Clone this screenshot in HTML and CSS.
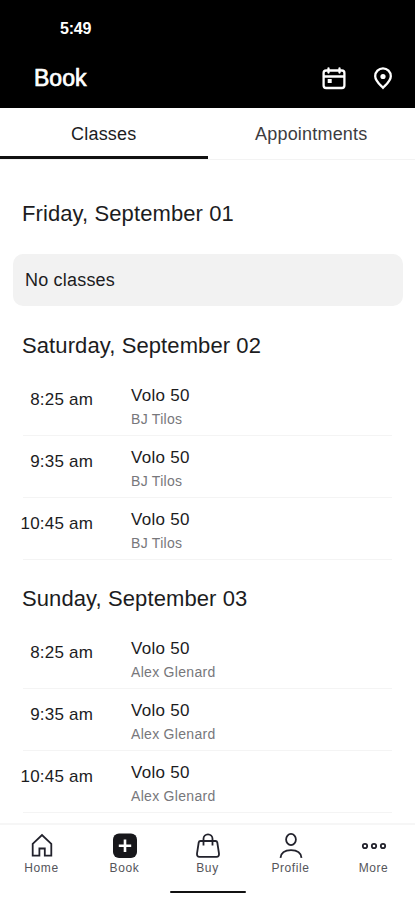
FILE: index.html
```html
<!DOCTYPE html>
<html lang="en">
<head>
    <meta charset="UTF-8">
    <meta name="viewport" content="width=device-width, initial-scale=1.0">
    <title>Book</title>
    <link rel="stylesheet" href="styles.css">
</head>
<body>

    <div class="app">
        <header class="header">
            <div class="status-bar"><span class="clock">5:49</span></div>
            <div class="title-bar">
                <h1>Book</h1>
                <div class="actions">
                    <svg width="24" height="24" viewBox="0 0 24 24">
                        <rect x="1.600" y="3.500" width="20.800" height="17.500" rx="2.500"/>
                        <path d="M2 9.500h20M6.500 1.500v4M17.500 1.500v4"/>
                        <rect class="dot" x="5.700" y="12" width="4" height="4"/>
                    </svg>
                    <svg width="20" height="24" viewBox="0 0 20 24">
                        <path d="M10 20.800C7.500 18 2.200 14 2.200 9.200a7.800 7.800 0 0 1 15.600 0c0 4.800-5.300 8.800-7.800 11.600z"/>
                        <circle class="dot" cx="10" cy="9.500" r="2.600"/>
                    </svg>
                </div>
            </div>
        </header>

        <nav class="tabs">
            <a class="tab active">Classes</a>
            <a class="tab">Appointments</a>
        </nav>

        <main class="schedule">
            <section class="day">
                <h2>Friday, September 01</h2>
                <div class="empty">No classes</div>
            </section>

            <section class="day">
                <h2>Saturday, September 02</h2>
                <div class="class-row">
                    <div class="time">8:25 am</div>
                    <div class="info"><div class="name">Volo 50</div><div class="teacher">BJ Tilos</div></div>
                </div>
                <div class="class-row">
                    <div class="time">9:35 am</div>
                    <div class="info"><div class="name">Volo 50</div><div class="teacher">BJ Tilos</div></div>
                </div>
                <div class="class-row">
                    <div class="time">10:45 am</div>
                    <div class="info"><div class="name">Volo 50</div><div class="teacher">BJ Tilos</div></div>
                </div>
            </section>

            <section class="day">
                <h2>Sunday, September 03</h2>
                <div class="class-row">
                    <div class="time">8:25 am</div>
                    <div class="info"><div class="name">Volo 50</div><div class="teacher">Alex Glenard</div></div>
                </div>
                <div class="class-row">
                    <div class="time">9:35 am</div>
                    <div class="info"><div class="name">Volo 50</div><div class="teacher">Alex Glenard</div></div>
                </div>
                <div class="class-row">
                    <div class="time">10:45 am</div>
                    <div class="info"><div class="name">Volo 50</div><div class="teacher">Alex Glenard</div></div>
                </div>
            </section>
        </main>

        <footer class="footer">
            <nav class="bottom-nav">
                <a class="nav-item">
                    <svg width="28" height="28" viewBox="0 0 28 28"><path d="M4.700 23.700V11.800L14 3l9.300 8.800v11.900h-6.500v-7.200h-5.400v7.200z"/></svg>
                    <span>Home</span>
                </a>
                <a class="nav-item">
                    <svg width="28" height="28" viewBox="0 0 28 28"><rect class="solid" x="2" y="1.500" width="24" height="24.500" rx="6"/><path class="plus" d="M14 7.500v12.500M7.800 13.700h12.400"/></svg>
                    <span>Book</span>
                </a>
                <a class="nav-item">
                    <svg width="28" height="28" viewBox="0 0 28 28"><path d="M6.500 9h15q1.500 0 1.800 1.500l1.700 11q.3 3.300-2.500 3.300h-17q-2.800 0-2.500-3.300l1.700-11Q5 9 6.500 9zM9.500 13.500V6.800a4.500 4.500 0 0 1 9 0v6.700"/></svg>
                    <span>Buy</span>
                </a>
                <a class="nav-item">
                    <svg width="28" height="28" viewBox="0 0 28 28"><ellipse cx="14" cy="7.500" rx="4.900" ry="5.600"/><path d="M3.500 25.800c.5-5 4.500-7.700 10.500-7.700s10 2.700 10.500 7.700"/></svg>
                    <span>Profile</span>
                </a>
                <a class="nav-item">
                    <svg width="28" height="28" viewBox="0 0 28 28"><circle cx="5" cy="14" r="2.200"/><circle cx="14" cy="14" r="2.200"/><circle cx="23" cy="14" r="2.200"/></svg>
                    <span>More</span>
                </a>
            </nav>
            <div class="home-indicator"></div>
        </footer>
    </div>

</body>
</html>
```
FILE: styles.css
```css
* {
    box-sizing: border-box;
}

body {
    margin: 0;
    font-family: "Liberation Sans", Arial, sans-serif;
    background: #fff;
    color: #1c1c1e;
}

.app {
    display: flex;
    flex-direction: column;
    height: 900px;
    overflow: hidden;
}

/* Header */
.header {
    flex: none;
    height: 108px;
    background: #000;
    color: #fff;
}

.status-bar {
    height: 56px;
    padding: 19px 0 0 60px;
    font-size: 16px;
    line-height: 19px;
    font-weight: bold;
    letter-spacing: -0.2px;
}

.title-bar {
    display: flex;
    justify-content: space-between;
    align-items: center;
    height: 45px;
    padding: 0 22px 0 34px;
}

.title-bar h1 {
    margin: 0;
    font-size: 23px;
    font-weight: normal;
    -webkit-text-stroke: 0.7px #fff;
}

.actions {
    display: flex;
    gap: 27px;
}

.actions svg {
    fill: none;
    stroke: #fff;
    stroke-width: 2.3;
    stroke-linecap: round;
}

.actions .dot {
    fill: #fff;
    stroke: none;
}

/* Tabs */
.tabs {
    display: flex;
    flex: none;
    height: 52px;
    border-bottom: 1px solid #f3f3f3;
}

.tab {
    width: 50%;
    height: 51px;
    text-align: center;
    font-size: 18px;
    line-height: 52px;
    letter-spacing: 0.2px;
    color: #3c3c40;
}

.tab.active {
    color: #1c1c1e;
    border-bottom: 3px solid #111;
}

/* Schedule */
.schedule {
    flex: 1;
    min-height: 0;
    overflow: hidden;
    padding: 41px 12px 0 13px;
}

.day h2 {
    margin: 0 0 0 9px;
    font-size: 22px;
    font-weight: normal;
    line-height: 26px;
    letter-spacing: 0.1px;
}

.empty {
    height: 52px;
    margin: 27px 0;
    padding-left: 12px;
    border-radius: 10px;
    background: #f2f2f2;
    font-size: 18px;
    line-height: 52px;
    letter-spacing: 0.2px;
}

.day .class-row:last-child {
    margin-bottom: 26px;
}

.class-row {
    display: flex;
    height: 62px;
    margin: 0 11px 0 10px;
    border-bottom: 1px solid #f4f4f4;
}

.day h2 + .class-row {
    margin-top: 15px;
}

.time {
    width: 80px;
    margin: 16px 38px 0 -10px;
    text-align: right;
    font-size: 17px;
    line-height: 20px;
    letter-spacing: 0.2px;
}

.name {
    padding-top: 12px;
    font-size: 17px;
    line-height: 20px;
    letter-spacing: 0.3px;
}

.teacher {
    padding-top: 4px;
    font-size: 14px;
    line-height: 18px;
    letter-spacing: 0.3px;
    color: #77777b;
}

/* Bottom navigation */
.footer {
    flex: none;
    height: 77px;
    border-top: 2px solid #f6f6f6;
    background: #fff;
}

.bottom-nav {
    display: flex;
    height: 66px;
    padding-top: 7px;
}

.nav-item {
    display: flex;
    flex: 1;
    flex-direction: column;
    align-items: center;
    gap: 1px;
    font-size: 12px;
    line-height: 15px;
    letter-spacing: 0.6px;
    color: #55555a;
}

.nav-item svg {
    fill: none;
    stroke: #22222c;
    stroke-width: 1.8;
}

.nav-item .solid {
    fill: #17171b;
    stroke: none;
}

.nav-item .plus {
    stroke: #fff;
    stroke-width: 2.6;
}

.home-indicator {
    width: 76px;
    height: 2px;
    margin: 0 auto;
    border-radius: 1px;
    background: #111;
}
```
